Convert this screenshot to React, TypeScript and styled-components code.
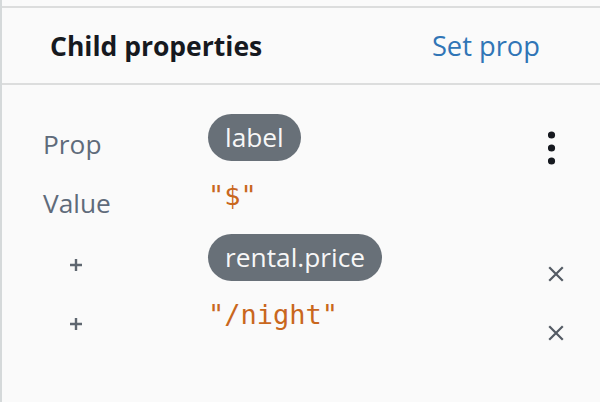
import React from "react";
import styled, { createGlobalStyle } from "styled-components";

const Global = createGlobalStyle`
  html, body {
    margin: 0;
    padding: 0;
    background: #fafafa;
  }
  body {
    font-family: "Open Sans", "Noto Sans", sans-serif;
    -webkit-font-smoothing: antialiased;
  }
`;

const Panel = styled.div`
  width: 600px;
  height: 402px;
  box-sizing: border-box;
  border-left: 2px solid #d5d9da;
  padding-top: 6px;
  background: #fafafa;
  overflow: hidden;
`;

const Header = styled.div`
  display: flex;
  align-items: center;
  justify-content: space-between;
  height: 75px;
  border-top: 2px solid #dcdddd;
  border-bottom: 2px solid #dcdddd;
  padding: 0 60px 0 48px;
`;

const Title = styled.h2`
  margin: 0;
  font-size: 26.5px;
  line-height: 36px;
  font-weight: 700;
  color: #16191f;
`;

const Link = styled.a`
  font-size: 27.3px;
  line-height: 36px;
  color: #3075b6;
  text-decoration: none;
  cursor: pointer;
`;

const Body = styled.div`
  display: flex;
  flex-direction: column;
  padding: 29px 0 0 41px;
`;

const Row = styled.div<{ $h: number }>`
  display: grid;
  grid-template-columns: 165px 340px 48px;
  align-items: start;
  height: ${(p) => p.$h}px;
`;

const Cell = styled.div<{ $top?: number; $indent?: number }>`
  display: flex;
  align-items: center;
  margin-top: ${(p) => p.$top ?? 0}px;
  padding-left: ${(p) => p.$indent ?? 0}px;
`;

const Label = styled.span`
  font-size: 26.3px;
  line-height: 36px;
  color: #5f6b7a;
`;

const Pill = styled.span`
  display: inline-block;
  background: #687078;
  color: #f7f7f7;
  font-size: 26.3px;
  line-height: 36px;
  padding: 5px 17px 6px;
  border-radius: 24px;
  white-space: nowrap;
`;

const Literal = styled.span`
  font-family: "DejaVu Sans Mono", "Liberation Mono", monospace;
  font-size: 27px;
  line-height: 36px;
  color: #c9671d;
  white-space: pre;
`;

const IconButton = styled.button`
  display: flex;
  align-items: center;
  justify-content: center;
  padding: 0;
  margin: 0;
  border: none;
  background: none;
  cursor: pointer;
`;

const Kebab = () => (
  <svg width="8" height="34" viewBox="0 0 8 34">
    <circle cx="3.5" cy="4" r="3.6" fill="#16191f" />
    <circle cx="3.5" cy="17" r="3.6" fill="#16191f" />
    <circle cx="3.5" cy="30" r="3.6" fill="#16191f" />
  </svg>
);

const Close = () => (
  <svg width="16" height="16" viewBox="0 0 16 16">
    <path d="M2 2L14 14M14 2L2 14" stroke="#545b64" strokeWidth="2.2" strokeLinecap="square" />
  </svg>
);

const Plus = () => (
  <svg width="14" height="14" viewBox="0 0 14 14">
    <path d="M7 1V13M1 7H13" stroke="#5f6770" strokeWidth="2.4" />
  </svg>
);

export default function App() {
  return (
    <>
      <Global />
      <Panel>
        <Header>
          <Title>Child properties</Title>
          <Link>Set prop</Link>
        </Header>
        <Body>
          <Row $h={64}>
            <Cell $top={12}>
              <Label>Prop</Label>
            </Cell>
            <Cell>
              <Pill>label</Pill>
            </Cell>
            <Cell $top={17}>
              <IconButton aria-label="More actions">
                <Kebab />
              </IconButton>
            </Cell>
          </Row>
          <Row $h={56}>
            <Cell $top={7}>
              <Label>Value</Label>
            </Cell>
            <Cell>
              <Literal>"$"</Literal>
            </Cell>
            <Cell />
          </Row>
          <Row $h={63}>
            <Cell $top={24} $indent={26}>
              <Plus />
            </Cell>
            <Cell>
              <Pill>rental.price</Pill>
            </Cell>
            <Cell $top={32}>
              <IconButton aria-label="Remove">
                <Close />
              </IconButton>
            </Cell>
          </Row>
          <Row $h={60}>
            <Cell $top={20} $indent={26}>
              <Plus />
            </Cell>
            <Cell>
              <Literal>"/night"</Literal>
            </Cell>
            <Cell $top={28}>
              <IconButton aria-label="Remove">
                <Close />
              </IconButton>
            </Cell>
          </Row>
        </Body>
      </Panel>
    </>
  );
}
